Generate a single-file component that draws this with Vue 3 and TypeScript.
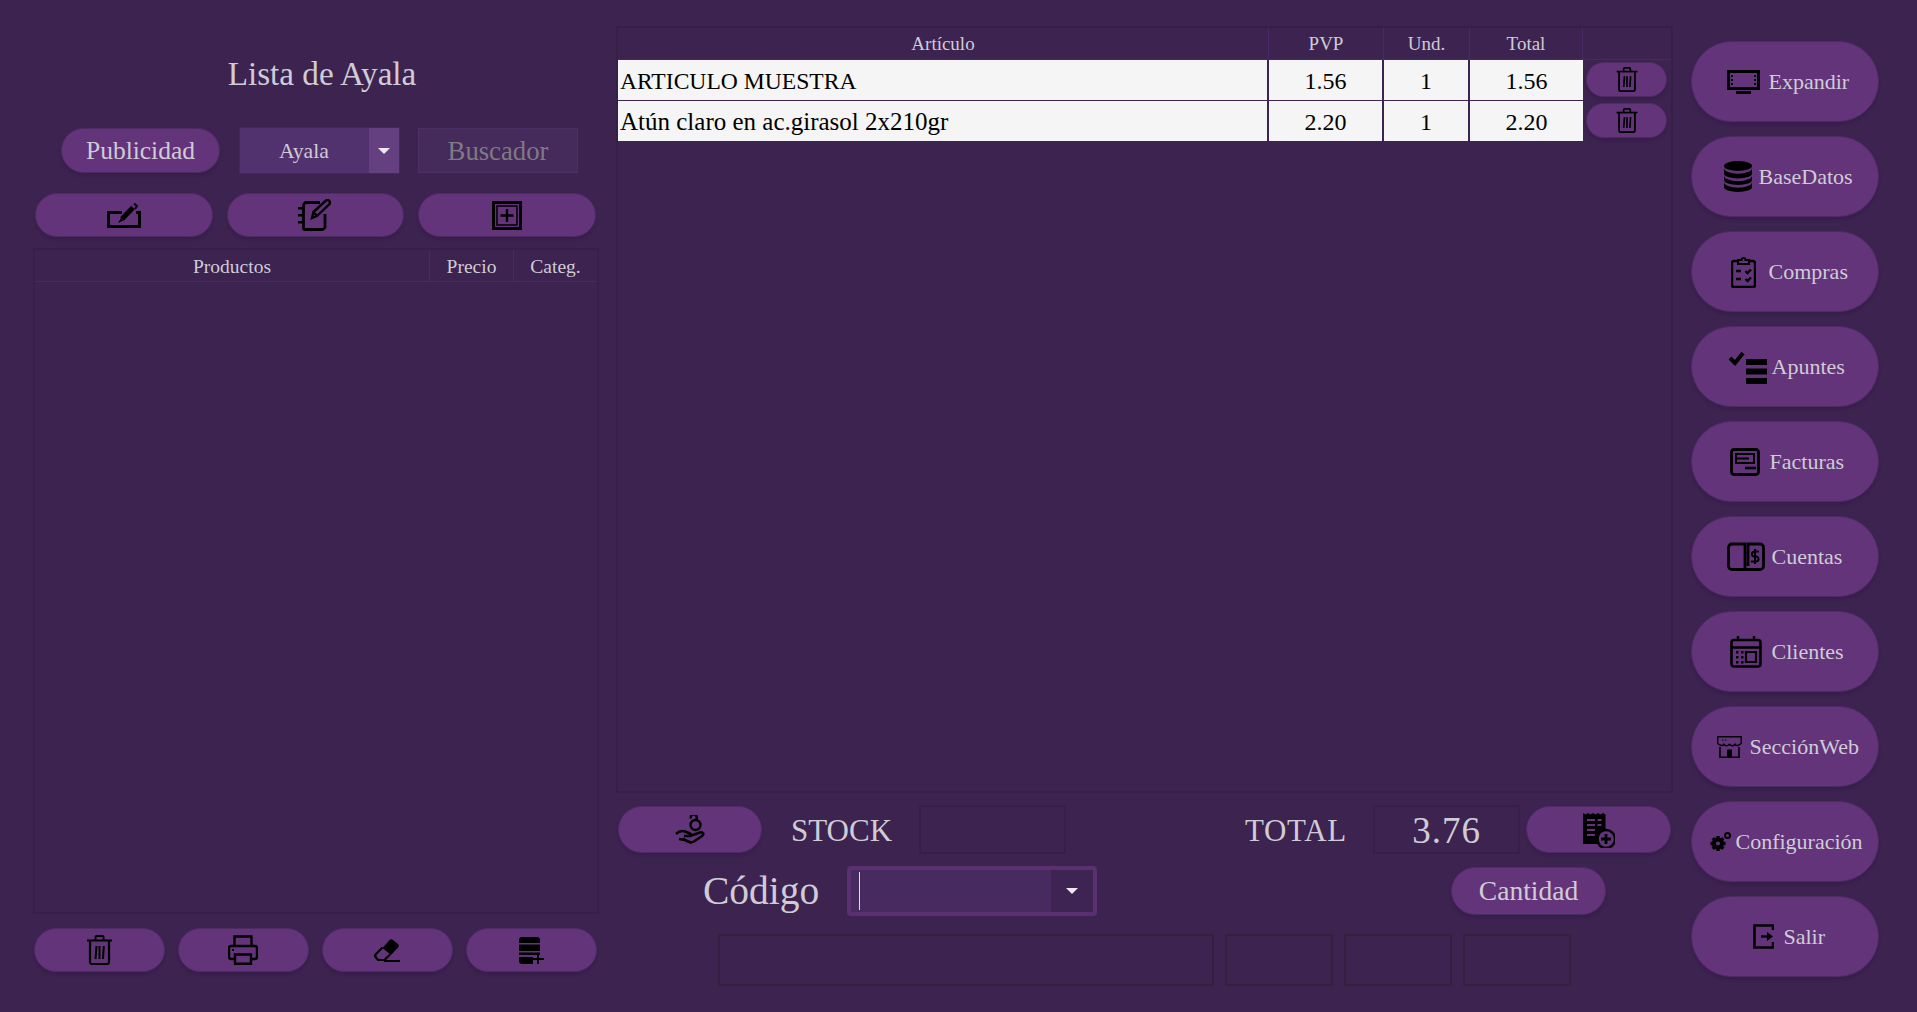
<template>
  <div class="app">
    <section class="left">
      <h1 class="title">Lista de Ayala</h1>

      <div class="filters">
        <button class="pill pub">Publicidad</button>
        <div class="combo">
          <span class="combo-val">Ayala</span>
          <span class="combo-btn"><i class="caret"></i></span>
        </div>
        <div class="search">Buscador</div>
      </div>

      <div class="tools">
        <button class="pill tool"><Ico name="edit" /></button>
        <button class="pill tool"><Ico name="notes" /></button>
        <button class="pill tool"><Ico name="frame" /></button>
      </div>

      <div class="products">
        <div class="products-head">
          <span>Productos</span>
          <span>Precio</span>
          <span>Categ.</span>
        </div>
      </div>

      <div class="actions">
        <button class="pill action"><Ico name="trash" /></button>
        <button class="pill action"><Ico name="printer" /></button>
        <button class="pill action"><Ico name="eraser" /></button>
        <button class="pill action"><Ico name="dbplus" /></button>
      </div>
    </section>

    <section class="center">
      <div class="ticket">
        <div class="ticket-head">
          <span>Artículo</span>
          <span>PVP</span>
          <span>Und.</span>
          <span>Total</span>
          <span></span>
        </div>
        <div v-for="row in rows" :key="row.name" class="ticket-row">
          <span class="cell name">{{ row.name }}</span>
          <span class="cell">{{ row.pvp }}</span>
          <span class="cell">{{ row.qty }}</span>
          <span class="cell">{{ row.pvp }}</span>
          <button class="pill del"><Ico name="trash" :w="22" :h="25" /></button>
        </div>
      </div>

      <div class="totals">
        <button class="pill wide"><Ico name="hand" /></button>
        <span class="big stock-label">STOCK</span>
        <div class="box"></div>
        <span class="big total-label">TOTAL</span>
        <div class="box amount">{{ total }}</div>
        <button class="pill wide doc"><Ico name="docplus" /></button>
      </div>

      <div class="code-row">
        <label class="code-label">Código</label>
        <div class="code-combo">
          <span class="code-input"><i class="cursor"></i></span>
          <span class="code-btn"><i class="caret"></i></span>
        </div>
        <button class="pill qty">Cantidad</button>
      </div>

      <div class="fields">
        <div class="field f-main"></div>
        <div class="field"></div>
        <div class="field"></div>
        <div class="field"></div>
      </div>
    </section>

    <nav class="side">
      <button
        v-for="item in menu"
        :key="item.label"
        class="pill nav"
        :style="{ paddingLeft: item.left + 'px', gap: item.gap + 'px' }"
      >
        <Ico :name="item.icon" />
        <span>{{ item.label }}</span>
      </button>
    </nav>
  </div>
</template>

<script setup lang="ts">
import { h } from 'vue';

interface Part {
  d: string;
  sw?: number;
  fill?: string;
  stroke?: string;
}

interface IconDef {
  w: number;
  h: number;
  parts: Part[];
}

const BTN = '#63347a';

const icons: Record<string, IconDef> = {
  expand: {
    w: 33,
    h: 24,
    parts: [
      { d: 'M1.500 1.500h30v17h-30z', sw: 3 },
      { d: 'M9 21h15v3H9z', fill: '#000' },
      { d: 'M4 5h2v2H4zM4 9h2v2H4zM4 13h2v2H4zM27 5h2v2h-2zM27 9h2v2h-2zM27 13h2v2h-2z', fill: '#000' }
    ]
  },
  db: {
    w: 28,
    h: 31,
    parts: [
      { d: 'M0 5a14 5 0 0 1 28 0a14 5 0 0 1-28 0z', fill: '#000' },
      { d: 'M0 7v5.500a14 5 0 0 0 28 0V7a14 5.800 0 0 1-28 0z', fill: '#000' },
      { d: 'M0 14.500V19a14 5 0 0 0 28 0v-4.500a14 5.800 0 0 1-28 0z', fill: '#000' },
      { d: 'M0 21V26a14 5 0 0 0 28 0v-5a14 5.800 0 0 1-28 0z', fill: '#000' }
    ]
  },
  clipboard: {
    w: 25,
    h: 32,
    parts: [
      { d: 'M7 5H3a2 2 0 0 0-2 2v22a2 2 0 0 0 2 2h19a2 2 0 0 0 2-2V7a2 2 0 0 0-2-2h-4', sw: 2.400 },
      { d: 'M7 8V4h3.500a2 2 0 0 1 4 0H18v4z', sw: 2.200 },
      { d: 'M5 15h5M5 23h5', sw: 2.600 },
      { d: 'M14.500 15l2 2 3.500-3.500M14.500 23l2 2 3.500-3.500', sw: 2.400 }
    ]
  },
  apuntes: {
    w: 39,
    h: 34,
    parts: [
      { d: 'M2 8l5 5 8-10', sw: 4 },
      { d: 'M18 9h21v6H18zM18 18.500h21v6H18zM18 28h21v6H18z', fill: '#000' }
    ]
  },
  factura: {
    w: 30,
    h: 28,
    parts: [
      { d: 'M4 1.500h22a2.500 2.500 0 0 1 2.500 2.500v20a2.500 2.500 0 0 1-2.500 2.500H4A2.500 2.500 0 0 1 1.500 24V4A2.500 2.500 0 0 1 4 1.500z', sw: 2.800 },
      { d: 'M6 6h18v9H6z', sw: 2 },
      { d: 'M7 10.500h12', sw: 2 },
      { d: 'M15 20h11', sw: 2.600 }
    ]
  },
  cuentas: {
    w: 38,
    h: 30,
    parts: [
      { d: 'M18 2H5a3.500 3.500 0 0 0-3.500 3.500V24a3.500 3.500 0 0 0 3.500 3.500h13z', sw: 2.800 },
      { d: 'M18 27.500h15a3.500 3.500 0 0 0 3.500-3.500V5.500A3.500 3.500 0 0 0 33 2H21v22', sw: 2.800 },
      { d: 'M32 9.500h-4.500a2.500 2.500 0 0 0 0 5h1.500a2.500 2.500 0 0 1 0 5h-5M28 7v15', sw: 2 }
    ]
  },
  calendar: {
    w: 32,
    h: 32,
    parts: [
      { d: 'M4 4h24a2.500 2.500 0 0 1 2.500 2.500V28a2.500 2.500 0 0 1-2.500 2.500H4A2.500 2.500 0 0 1 1.500 28V6.500A2.500 2.500 0 0 1 4 4z', sw: 2.600 },
      { d: 'M2 11.500h28M8 0v5M24 0v5', sw: 2.400 },
      { d: 'M16 16h10v10H16z', sw: 2.200 },
      { d: 'M6 15h2.500v2.500H6zM11 15h2.500v2.500H11zM6 20h2.500v2.500H6zM11 20h2.500v2.500H11zM6 25h2.500v2.500H6zM11 25h2.500v2.500H11z', fill: '#000' }
    ]
  },
  store: {
    w: 25,
    h: 22,
    parts: [
      { d: 'M.8 .8h23.400V7.500c-3 2.500-5 2.500-6 .8-1.500 1.800-4 2-5.800 0-1.800 2-4.300 1.800-5.800 0-1 1.700-3 1.700-6-.8z', sw: 1.400 },
      { d: 'M3 11v10.300h19V11', sw: 1.600 },
      { d: 'M10 13.500h5V22h-5z', fill: '#000' },
      { d: 'M5 3.500h1.500v1H5zM8 3.500h1.500v1H8z', fill: '#000' }
    ]
  },
  config: {
    w: 21,
    h: 20,
    parts: [
      { d: 'M8 4v15M.5 11.500h15M2.700 6.200l10.600 10.600M13.300 6.200 2.700 16.800', sw: 3.400 },
      { d: 'M8 5.500a6 6 0 1 1 0 12a6 6 0 0 1 0-12z', fill: '#000' },
      { d: 'M8 9.500a2 2 0 1 1 0 4a2 2 0 0 1 0-4z', fill: BTN },
      { d: 'M17.500 1a2.500 2.500 0 1 1 0 5a2.500 2.500 0 0 1 0-5z', sw: 2 }
    ]
  },
  exit: {
    w: 21,
    h: 25,
    parts: [
      { d: 'M20 6V1.500H1.500v22H20V18', sw: 2.600 },
      { d: 'M8 12.500h9', sw: 2.400 },
      { d: 'M14 8l6 4.500-6 4.500z', fill: '#000' }
    ]
  },
  edit: {
    w: 34,
    h: 25,
    parts: [
      { d: 'M15 9.500H1.500v14h31v-14H29', sw: 3 },
      { d: 'M15 16L26 4.500', sw: 5 },
      { d: 'M27 .5l3 2.500-2 3', sw: 2 },
      { d: 'M11 20l3-5 2.500 2.500z', fill: '#000' }
    ]
  },
  notes: {
    w: 34,
    h: 32,
    parts: [
      { d: 'M22 3.500H8.500a3 3 0 0 0-3 3V29a1.500 1.500 0 0 0 1.500 1.500h17a3 3 0 0 0 3-3V15', sw: 2.800 },
      { d: 'M0 8h5v2.500H0zM0 15h5v2.500H0zM0 22h5v2.500H0z', fill: '#000' },
      { d: 'M14 19l1.500-6L28 1.500c2-1.500 5 1 3.500 3.500L19 17z', sw: 2.400 },
      { d: 'M15.500 13L19 17', sw: 2 }
    ]
  },
  frame: {
    w: 30,
    h: 30,
    parts: [
      { d: 'M1.500 2.500h27v26h-27z', sw: 3 },
      { d: 'M5 6h20v19H5z', sw: 1.500 },
      { d: 'M15 9v13M8.500 15.500h13', sw: 2.400 }
    ]
  },
  trash: {
    w: 25,
    h: 30,
    parts: [
      { d: 'M0 5.500h25', sw: 2 },
      { d: 'M8.500 5V2a1 1 0 0 1 1-1h6a1 1 0 0 1 1 1v3', sw: 2 },
      { d: 'M3 6v21a2 2 0 0 0 2 2h15a2 2 0 0 0 2-2V6', sw: 2.200 },
      { d: 'M8.500 24L9.500 11M12.500 24V11M16 24l.8-13', sw: 2 }
    ]
  },
  printer: {
    w: 30,
    h: 30,
    parts: [
      { d: 'M6.500 11V1.500h17V11', sw: 2.400 },
      { d: 'M6 24H3a2 2 0 0 1-2-2V13a2 2 0 0 1 2-2h24a2 2 0 0 1 2 2v9a2 2 0 0 1-2 2h-3', sw: 2.400 },
      { d: 'M7 19.500h16v9.300H7z', sw: 2.400 },
      { d: 'M4 14h2v2H4z', fill: '#000' }
    ]
  },
  eraser: {
    w: 26,
    h: 23,
    parts: [
      { d: 'M8.500 9l7-8c1-1 2.500-1 3.500 0l5 4c1 1 1 2.500 0 3.500L17 16z', fill: '#000' },
      { d: 'M8.500 8.500L2 15c-1 1-1 2.500 0 3.500l2 2.500h6.500L16 15.500', sw: 2.200 },
      { d: 'M10 22h16', sw: 2 }
    ]
  },
  dbplus: {
    w: 25,
    h: 27,
    parts: [
      { d: 'M3 0h15a3 3 0 0 1 3 3v3H0V3a3 3 0 0 1 3-3zM0 7.500h21V14H0zM0 15.500h21V18H0z', fill: '#000' },
      { d: 'M0 20h14v7H3a3 3 0 0 1-3-3z', fill: '#000' },
      { d: 'M19 17v10M14 22h11', sw: 2 }
    ]
  },
  hand: {
    w: 30,
    h: 30,
    parts: [
      { d: 'M15.500 10a5 5 0 1 0 10 0a5 5 0 1 0-10 0z', sw: 2.400 },
      { d: 'M16 3.500a3 3 0 1 1 4.500 1.500', sw: 2.400 },
      { d: 'M1 19c3-3 6-3.500 9-2.500l5 2c2 1 1 3-1.500 2.500H9', sw: 2.600 },
      { d: 'M15 21l10-3.500c3-.8 4.500 1.500 2 3.500l-8 5.500c-2 1.200-4 1-6 0L8 24', sw: 2.600 },
      { d: 'M4 24l6 1', sw: 2.400 }
    ]
  },
  docplus: {
    w: 32,
    h: 36,
    parts: [
      { d: 'M0 1l2.500 1.500L5 1l2.500 1.500L10 1l2.500 1.500L15 1l2.500 1.500L20 1l2.500 1.500V18a9 9 0 0 0-5 14H0z', fill: '#000' },
      { d: 'M4 8h8M14.500 8h4M4 13h8M14.500 13h4M4 18h8M4 23h8', sw: 2, stroke: BTN },
      { d: 'M14 27a9 9 0 1 1 18 0a9 9 0 1 1-18 0z', sw: 2.400 },
      { d: 'M23 22v10M18 27h10', sw: 2.800 }
    ]
  }
};

// the svg stays small so every icon can be drawn from the table above
const Ico = (props: { name: string; w?: number; h?: number }) => {
  const def = icons[props.name];
  return h(
    'svg',
    {
      class: 'ico',
      width: props.w ?? def.w,
      height: props.h ?? def.h,
      viewBox: `0 0 ${def.w} ${def.h}`
    },
    def.parts.map((p) =>
      p.fill
        ? h('path', { d: p.d, fill: p.fill })
        : h('path', { d: p.d, fill: 'none', stroke: p.stroke ?? '#000', 'stroke-width': p.sw ?? 2 })
    )
  );
};
Ico.props = ['name', 'w', 'h'];

const rows = [
  { name: 'ARTICULO MUESTRA', pvp: '1.56', qty: 1 },
  { name: 'Atún claro en ac.girasol 2x210gr', pvp: '2.20', qty: 1 }
];

const total = '3.76';

const menu = [
  { label: 'Expandir', icon: 'expand', left: 35, gap: 9 },
  { label: 'BaseDatos', icon: 'db', left: 32, gap: 7 },
  { label: 'Compras', icon: 'clipboard', left: 39, gap: 13 },
  { label: 'Apuntes', icon: 'apuntes', left: 36, gap: 5 },
  { label: 'Facturas', icon: 'factura', left: 38, gap: 10 },
  { label: 'Cuentas', icon: 'cuentas', left: 35, gap: 7 },
  { label: 'Clientes', icon: 'calendar', left: 38, gap: 10 },
  { label: 'SecciónWeb', icon: 'store', left: 25, gap: 8 },
  { label: 'Configuración', icon: 'config', left: 18, gap: 5 },
  { label: 'Salir', icon: 'exit', left: 61, gap: 10 }
];
</script>

<style>
html,
body {
  margin: 0;
  background: #3d2350;
}
</style>

<style scoped>
.app {
  width: 1917px;
  height: 1012px;
  display: flex;
  background: #3d2350;
  color: #cfccd6;
  font-family: "Liberation Serif", serif;
  overflow: hidden;
}

.pill {
  display: flex;
  align-items: center;
  justify-content: center;
  box-sizing: border-box;
  padding: 0;
  border: 1px solid #4f2b66;
  border-radius: 24px;
  background: #63347a;
  color: #cfccd6;
  font-family: inherit;
  box-shadow: 0 3px 3px rgba(40, 20, 60, 0.25);
}

.ico {
  display: block;
  flex: none;
}

.caret {
  display: block;
  width: 0;
  height: 0;
  border-left: 6px solid transparent;
  border-right: 6px solid transparent;
  border-top: 6px solid #eee8f2;
}

/* left column */
.left {
  width: 566px;
  margin-left: 33px;
  display: flex;
  flex-direction: column;
}

.title {
  margin: 0 0 32px;
  padding: 52px 0 0 12px;
  font-size: 33.2px;
  font-weight: 400;
  line-height: 44px;
  text-align: center;
}

.filters {
  display: flex;
  gap: 19.500px;
  height: 45px;
  margin-left: 28px;
}

.pub {
  width: 159px;
  padding-top: 1px;
  font-size: 25.5px;
}

.combo {
  width: 159px;
  display: flex;
  font-size: 21.7px;
  box-shadow: 0 0 0 1px #442a58;
}

.combo-val {
  flex: 1;
  display: flex;
  align-items: center;
  justify-content: center;
  padding-top: 1px;
  background: #52326e;
}

.combo-btn {
  width: 30px;
  display: flex;
  align-items: center;
  justify-content: center;
  background: #654080;
}

.search {
  width: 160px;
  box-sizing: border-box;
  display: flex;
  align-items: center;
  justify-content: center;
  padding-top: 1px;
  background: #452a5c;
  border: 1px solid #4c3064;
  color: #7f7b82;
  font-size: 26.7px;
}

.tools {
  display: flex;
  gap: 14px;
  height: 44px;
  margin: 20px 0 11px 2px;
}

.tool {
  width: 177.5px;
}

.products {
  height: 666px;
  box-sizing: border-box;
  border: 2px solid #372048;
}

.products-head {
  display: grid;
  grid-template-columns: 1fr 84px 84px;
  height: 31px;
  border-bottom: 1px solid #4a2a66;
  font-size: 19.5px;
}

.products-head span {
  display: flex;
  align-items: center;
  justify-content: center;
  padding-top: 2px;
}

.products-head span + span {
  border-left: 1px solid #4a2a66;
}

.actions {
  display: flex;
  gap: 13.500px;
  height: 44px;
  margin: 14px 0 0 1px;
}

.action {
  width: 130.500px;
}

/* center column */
.center {
  width: 1056px;
  margin-left: 17px;
  padding-top: 26px;
  display: flex;
  flex-direction: column;
}

.ticket {
  height: 767px;
  margin-right: -1px;
  box-sizing: border-box;
  border: 2px solid #372048;
  font-size: 24.5px;
}

.ticket-head,
.ticket-row {
  display: grid;
  grid-template-columns: 651px 115px 86px 113px 1fr;
}

.ticket-head {
  height: 32px;
  font-size: 19px;
}

.ticket-head span {
  display: flex;
  align-items: center;
  justify-content: center;
  border-right: 1px solid #4a2a66;
  border-bottom: 1px solid #4a2a66;
}

.ticket-head span:last-child {
  border-right: 0;
}

.ticket-row {
  height: 40px;
  margin-bottom: 1px;
}

.cell {
  display: flex;
  align-items: center;
  justify-content: center;
  box-sizing: border-box;
  padding-top: 2px;
  border-right: 2px solid #3d2350;
  background: #f5f5f5;
  color: #000;
  font-size: 24px;
}

.cell.name {
  justify-content: flex-start;
  padding-left: 2px;
}

.ticket-row:nth-child(2) .name {
  font-size: 23.600px;
}

.ticket-row:nth-child(3) .name {
  font-size: 25px;
}

.cell:nth-child(4) {
  border-right: 0;
}

.del {
  width: 81px;
  height: 35px;
  margin: 2px 0 0 3px;
  border-radius: 18px;
}

.totals {
  display: flex;
  align-items: center;
  height: 49px;
  margin-top: 12px;
}

.wide {
  width: 144px;
  height: 47px;
  margin-left: 2px;
}

.big {
  padding-top: 2px;
  font-size: 31px;
}

.stock-label {
  width: 128px;
  margin-left: 29px;
  box-sizing: border-box;
}

.total-label {
  margin-left: auto;
  margin-right: 26px;
  letter-spacing: 0.7px;
}

.box {
  width: 147px;
  height: 49px;
  box-sizing: border-box;
  border: 2px solid #372048;
}

.amount {
  display: flex;
  align-items: center;
  justify-content: center;
  padding-top: 2px;
  font-size: 37px;
  letter-spacing: 1px;
}

.wide.doc {
  width: 145px;
  margin: 0 1px 0 6px;
}

.code-row {
  display: flex;
  align-items: center;
  height: 50px;
  margin-top: 12px;
}

.code-label {
  width: 144px;
  margin-left: 87px;
  font-size: 39.500px;
}

.code-combo {
  width: 250px;
  height: 50px;
  box-sizing: border-box;
  display: flex;
  border: 4px solid #5a3070;
  border-radius: 4px;
}

.code-input {
  flex: 1;
  position: relative;
  background: #472a5f;
}

.cursor {
  position: absolute;
  left: 8px;
  top: 2px;
  width: 1px;
  height: 38px;
  background: #e0dce6;
}

.code-btn {
  width: 42px;
  display: flex;
  align-items: center;
  justify-content: center;
  background: #3e2452;
}

.qty {
  width: 155px;
  height: 48px;
  margin-left: 354px;
  font-size: 27.5px;
}

.fields {
  display: flex;
  gap: 11px;
  height: 52px;
  margin: 18px 0 0 102px;
}

.field {
  width: 108px;
  box-sizing: border-box;
  border: 2px solid #34203f;
}

.f-main {
  width: 496px;
}

/* right column */
.side {
  width: 188px;
  margin-left: 18.500px;
  padding-top: 41px;
  display: flex;
  flex-direction: column;
  gap: 14px;
}

.nav {
  width: 188px;
  height: 81px;
  flex: none;
  justify-content: flex-start;
  border-radius: 41px;
  font-size: 22px;
}

.nav span {
  padding-top: 1px;
}
</style>
